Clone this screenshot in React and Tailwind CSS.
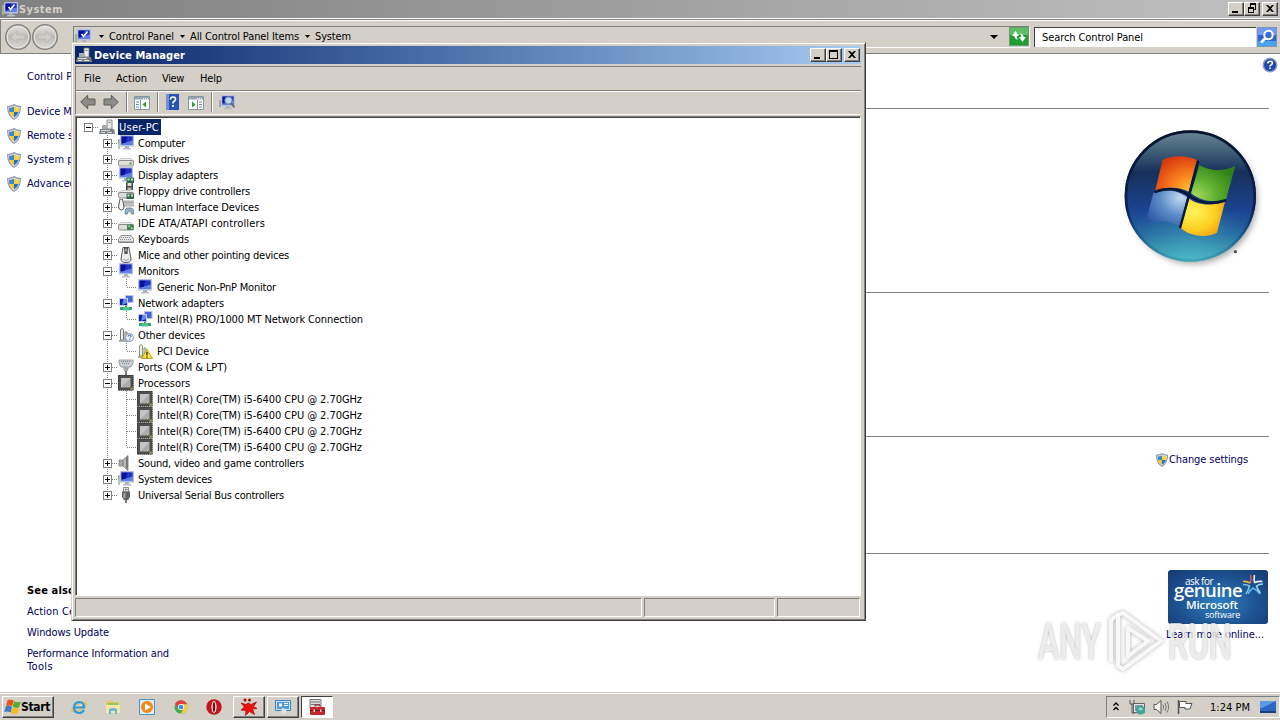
import React, { useLayoutEffect, useRef, useState } from 'react';

// Text set to a fixed advance width through letter spacing
const Fit = ({ w, className = '', children }) => {
  const ref = useRef(null);
  const [spacing, setSpacing] = useState(0);
  useLayoutEffect(() => {
    const natural = ref.current.getBoundingClientRect().width;
    setSpacing((w - natural) / ref.current.textContent.length);
  }, [w]);
  return (
    <span ref={ref} className={`inline-block whitespace-pre ${className}`} style={{ letterSpacing: `${spacing}px` }}>
      {children}
    </span>
  );
};

const Svg = ({ s = 16, className = '', children }) => (
  <svg width={s} height={s} viewBox="0 0 16 16" className={`block shrink-0 ${className}`}>
    {children}
  </svg>
);

const Screen = ({ x = 2, y = 0 }) => (
  <g transform={`translate(${x} ${y})`}>
    <path d="M5 11h4v2H5z" fill="#a9adb8" />
    <path d="M3 13h8v1.500H3z" fill="#b9bdc8" />
    <rect x="0" y="0" width="14" height="11.500" rx=".5" fill="#b9c0dc" />
    <rect x="1.500" y="1.500" width="11" height="8.500" fill="#2a48d0" />
    <path d="M1.500 1.500h6L6 8l-4.500.5z" fill="#0a129c" />
    <path d="M7.500 1.500h5V6L6.200 7z" fill="#1e34c4" />
    <path d="M1.500 9l11-3.500V10h-11z" fill="#5f80e8" />
  </g>
);

const Drive = () => (
  <g transform="translate(0 1)">
    <path d="M3 6.500h10l2.500 2.500H.5z" fill="#f0f0ee" stroke="#aaa" strokeWidth=".6" />
    <rect x=".5" y="8.500" width="15" height="5.500" rx="1.500" fill="#dededc" stroke="#777" strokeWidth=".8" />
    <path d="M11.500 10.500h2v2h-2z" fill="#4c9b3c" />
  </g>
);

const Card = () => (
  <g>
    <path d="M8.500 10.500H16V16H8.500z" fill="#2c6b48" />
    <path d="M9.500 11.500h2v2h-2zM13 11.500h2v2h-2z" fill="#c8e8cc" />
  </g>
);

const ICONS = {
  pc: (
    <>
      <path d="M8 1h5v9H8z" fill="#e8e8e6" stroke="#777" strokeWidth=".8" />
      <path d="M9.500 3h2v1h-2z" fill="#777" />
      <path d="M3 6h5v4H3z" fill="#a6abb0" />
      <path d="M1 10h14l1 5H0z" fill="#7b8082" />
      <path d="M2 11h9v1H2zM2 13h4v1H2zM8 13h5v1H8z" fill="#d9dddc" />
    </>
  ),
  computer: (
    <>
      <Screen />
      <path d="M0 4h2v10H0z" fill="#c0c4b4" />
      <path d="M0 5h1.500v3H0z" fill="#9ab45a" />
    </>
  ),
  disk: <Drive />,
  display: (
    <>
      <Screen x={1} />
      <Card />
    </>
  ),
  floppy: (
    <>
      <Drive />
      <path d="M8 0h7v7H8z" fill="#444" />
      <path d="M9.500 0h4v3h-4z" fill="#ddd" />
      <path d="M9.500 4.500h4V7h-4z" fill="#b8b8a8" />
      <Card />
    </>
  ),
  hid: (
    <>
      <path d="M6 2h10v5H6z" fill="#d8d8da" stroke="#888" strokeWidth=".7" />
      <path d="M7.500 3.500h7M7.500 5h7" stroke="#777" strokeDasharray="1 1" />
      <path d="M2 0h2.500l1.500 8q0 3-2.500 3T.5 8z" fill="#f5f5f5" stroke="#555" />
      <path d="M7 15q0-7 3-6h3q3 0 2.500 6h-2l-1-3h-2l-1 3z" fill="#8fb6cf" stroke="#546c80" strokeWidth=".7" />
    </>
  ),
  ide: (
    <>
      <Drive />
      <path d="M9 9.500h6.500V15H9z" fill="#3c8752" />
      <path d="M10.500 10.500h1.500v1.500h-1.500zM13 12.500h1.500V14H13z" fill="#c4ecc8" />
    </>
  ),
  keyboard: (
    <>
      <path d="M3 4.500h10l2.500 3.500v3.500H.5V8z" fill="#e6e6e6" stroke="#777" strokeWidth=".8" />
      <path d="M3 6.500h10M2 8.500h12" stroke="#888" strokeDasharray="1 1" />
      <path d="M1 11h14" stroke="#777" />
    </>
  ),
  mouse: (
    <>
      <path d="M5 .5h6L13 12q0 3.500-5 3.500T3 12z" fill="#efefef" stroke="#555" />
      <path d="M6 1h4l-.500 6h-3z" fill="#4c4c4c" />
      <path d="M7.500 1.500h1v3h-1z" fill="#eee" />
      <path d="M5 12q3 3 6 0" stroke="#999" fill="none" />
    </>
  ),
  monitor: <Screen x={1} />,
  network: (
    <>
      <path d="M7 0h8.500v8H7z" fill="#b9c2e4" />
      <path d="M8 1h6.500v6H8z" fill="#4666d8" />
      <path d="M1 3h9v8H1z" fill="#c7cce2" />
      <path d="M2 4h7v6H2z" fill="#141fb0" />
      <path d="M5.500 4H9v4L4 10z" fill="#6a8cec" />
      <path d="M7 10.500h2V12h5v3H2v-3h5z" fill="#35a36c" />
      <path d="M5 12h6v3.500H5z" fill="#4cc48b" />
    </>
  ),
  other: (
    <>
      <path d="M2.500 13V2.500q1.500-2 3 0V13zM7 13V5h2v8z" fill="#eee" stroke="#777" />
      <path d="M1 13h9v2H1z" fill="#aaa" />
      <circle cx="11.500" cy="10.500" r="4" fill="#eef3fb" stroke="#8196b8" />
      <path d="M10.200 9.500q0-1.500 1.400-1.500t1.400 1.300q0 .8-1.400 1.700m0 1.200v1" stroke="#2757b0" fill="none" />
    </>
  ),
  warn: (
    <>
      <path d="M2.500 13V2.500q1.500-2 3 0V13zM7 13V5h2v8z" fill="#eee" stroke="#8a9a68" />
      <path d="M1 13h6v2H1z" fill="#aaa" />
      <path d="M10 6.500L15.500 15.500H4.500z" fill="#ffe136" stroke="#b08e08" strokeWidth=".8" />
      <path d="M10 9v3.500m0 1v1.200" stroke="#222" strokeWidth="1.300" />
    </>
  ),
  port: (
    <>
      <path d="M1 1h14v3l-2 4H3L1 4z" fill="#cdd1d4" stroke="#888" strokeWidth=".8" />
      <path d="M3 2.500h10M4 4.500h8" stroke="#6c8090" strokeDasharray="1 1" />
      <path d="M5 8h6l-1 4H6z" fill="#a3abb0" />
      <path d="M7 12h2v4H7z" fill="#777" />
    </>
  ),
  cpu: (
    <>
      <path d="M0 0h15.500v15.500H0z" fill="#50504e" />
      <path d="M.5.5h14.500v14.500H.5z" fill="none" stroke="#333" strokeDasharray="1 1" />
      <path d="M3 3h9.500v9.500H3z" fill="#aaabaa" />
      <path d="M3 3h9.500L3 12.500z" fill="#c4c4c4" />
      <path d="M12 14.500l2.500-2.500v2.500z" fill="#d9c23c" />
    </>
  ),
  sound: (
    <>
      <path d="M1 5h4v6H1z" fill="#a8abac" stroke="#777" strokeWidth=".7" />
      <path d="M5 5l5-4.500v15L5 11z" fill="#b7babb" stroke="#777" strokeWidth=".8" />
      <path d="M8 3l2-2v14l-2-2z" fill="#75797b" />
    </>
  ),
  usb: (
    <>
      <path d="M5.500.5h5V5h-5z" fill="#ddd" stroke="#777" strokeWidth=".8" />
      <path d="M7 2h.8v1H7zM8.500 2h.8v1h-.8z" fill="#444" />
      <path d="M4 4.500h8V10l-2 3H6l-2-3z" fill="#5c6164" />
      <path d="M5.500 6h2v5h-2z" fill="#a7acae" />
      <path d="M7.300 13h1.400v3H7.300z" fill="#444" />
    </>
  ),
};

const CPU = 'Intel(R) Core(TM) i5-6400 CPU @ 2.70GHz';

// level, icon, label, label width, expander, last child
const TREE = [
  [1, 'computer', 'Computer', 47, '+'],
  [1, 'disk', 'Disk drives', 51, '+'],
  [1, 'display', 'Display adapters', 80, '+'],
  [1, 'floppy', 'Floppy drive controllers', 112, '+'],
  [1, 'hid', 'Human Interface Devices', 121, '+'],
  [1, 'ide', 'IDE ATA/ATAPI controllers', 127, '+'],
  [1, 'keyboard', 'Keyboards', 51, '+'],
  [1, 'mouse', 'Mice and other pointing devices', 151, '+'],
  [1, 'monitor', 'Monitors', 41, '-'],
  [2, 'monitor', 'Generic Non-PnP Monitor', 119, '', true],
  [1, 'network', 'Network adapters', 86, '-'],
  [2, 'network', 'Intel(R) PRO/1000 MT Network Connection', 206, '', true],
  [1, 'other', 'Other devices', 67, '-'],
  [2, 'warn', 'PCI Device', 52, '', true],
  [1, 'port', 'Ports (COM & LPT)', 89, '+'],
  [1, 'cpu', 'Processors', 52, '-'],
  [2, 'cpu', CPU, 205, ''],
  [2, 'cpu', CPU, 205, ''],
  [2, 'cpu', CPU, 205, ''],
  [2, 'cpu', CPU, 205, '', true],
  [1, 'sound', 'Sound, video and game controllers', 166, '+'],
  [1, 'computer', 'System devices', 74, '+'],
  [1, 'usb', 'Universal Serial Bus controllers', 146, '+', true],
];

// One 19px indent column: dotted guides and the expander box
const Guide = ({ up, down, across, box }) => (
  <svg width="19" height="16" viewBox="0 0 19 16" className="block shrink-0" shapeRendering="crispEdges">
    <g stroke="#808080" strokeDasharray="1 1" fill="none">
      {up && <path d="M9.500 0v8" />}
      {down && <path d="M9.500 8v8" />}
      {across && <path d="M10 8.500h9" />}
    </g>
    {box && (
      <>
        <rect x="5.500" y="4.500" width="8" height="8" fill="#fff" stroke="#808080" />
        <path d="M7 8.500h5" stroke="#000" />
        {box === '+' && <path d="M9.500 6v5" stroke="#000" />}
      </>
    )}
  </svg>
);

const TreeRow = ({ row }) => {
  const [level, icon, label, w, box, last] = row;
  return (
    <div className="flex h-4 items-center">
      <div className="w-[19px]" />
      {level === 1 ? (
        <Guide up down={!last} across box={box} />
      ) : (
        <>
          <Guide up down />
          <Guide up down={!last} across />
        </>
      )}
      <Svg className="ml-px">{ICONS[icon]}</Svg>
      <Fit w={w} className="ml-[4px]">{label}</Fit>
    </div>
  );
};

const RAISED = 'border border-t-white border-l-white border-r-[#404040] border-b-[#404040] bg-[#d4d0c8] shadow-[inset_-1px_-1px_0_#808080]';
const SUNKEN = 'border border-t-[#808080] border-l-[#808080] border-r-white border-b-white';

const CaptionButton = ({ kind, className = '' }) => (
  <div className={`h-[14px] w-4 shrink-0 ${RAISED} ${className}`}>
    <svg width="14" height="12" viewBox="0 0 14 12" className="block" shapeRendering="crispEdges">
      {kind === 'min' && <path d="M3 8h6v2H3z" />}
      {kind === 'max' && <path d="M2 1h9v9H2zM3 3v6h7V3z" fillRule="evenodd" />}
      {kind === 'restore' && <path d="M5 0h6v7H9v3H3V4h2zM6 2v2h3v2h1V2zM4 6v3h4V6z" fillRule="evenodd" />}
      {kind === 'close' && <path d="M3 2h2l2 2 2-2h2L8 5.500l3 3.500H9L7 7 5 9H3l3-3.500z" shapeRendering="auto" />}
    </svg>
  </div>
);

const Shield = ({ s = 16, className = '' }) => (
  <Svg s={s} className={className}>
    <path d="M8 0q3 2 7 2 0 10-7 14Q1 12 1 2q4 0 7-2z" fill="#8d9aa6" />
    <path d="M8 1.500q2.500 1.500 5.800 1.700Q13.500 11 8 14.700 2.500 11 2.200 3.200 5.500 3 8 1.500z" fill="#dfe4e8" />
    <path d="M8 2.500V8H3.400Q3 6 3 4q2.500 0 5-1.500z" fill="#3c84cc" />
    <path d="M8 2.500Q10.500 4 13 4q0 2-.4 4H8z" fill="#f5d33b" />
    <path d="M3.400 8H8v5.500Q4.500 11.500 3.400 8z" fill="#f2ca2e" />
    <path d="M8 8h4.600Q11.500 11.500 8 13.500z" fill="#2a6fc0" />
  </Svg>
);

const SIDE_LINKS = ['Device Manager', 'Remote settings', 'System protection', 'Advanced system settings'];
const SIDE_WIDTHS = [79, 80, 91, 130];

const NavCircle = ({ flip }) => (
  <svg width="28" height="28" viewBox="0 0 28 28" className="-mr-px block">
    <defs>
      <linearGradient id="nav" x2="0" y2="1">
        <stop offset="0" stopColor="#e8e6e3" />
        <stop offset=".5" stopColor="#bdbbb7" />
        <stop offset="1" stopColor="#dddbd7" />
      </linearGradient>
    </defs>
    <circle cx="14" cy="14" r="12.300" fill="url(#nav)" stroke="#85837f" strokeWidth="1.400" />
    <circle cx="14" cy="14" r="10.800" fill="none" stroke="#e6e5e1" />
    <path
      d="M7 14l6-6v4h8v4h-8v4z"
      fill="#cfcdc9"
      stroke="#b7b4ae"
      strokeWidth=".8"
      transform={flip ? 'translate(28 0) scale(-1 1)' : undefined}
    />
  </svg>
);

const Crumb = ({ w, children }) => (
  <>
    <svg width="5" height="3" viewBox="0 0 5 3" className="block">
      <path d="M0 0h5L2.500 3z" />
    </svg>
    <Fit w={w} className="mr-[6px] ml-[5px]">{children}</Fit>
  </>
);

const WindowsFlag = () => (
  <svg width="17" height="16" viewBox="130 130 280 260" className="block shrink-0">
    <path d="M188 150C215 135 260 135 290 150L266 245C240 232 200 228 165 243Z" fill="#e8531c" />
    <path d="M298 165C330 185 370 185 406 168L378 268C345 280 305 275 273 250Z" fill="#5aa82e" />
    <path d="M160 250C195 235 235 240 262 262L239 350C210 330 170 330 135 342Z" fill="#3a7ad0" />
    <path d="M268 266C300 290 345 285 375 275L351 368C320 385 270 380 243 355Z" fill="#f5bb1c" />
  </svg>
);

const Orb = () => (
  <svg width="150" height="160" viewBox="51 24 450 480" className="block">
    <defs>
      <linearGradient id="orb" x2="0" y2="1">
        <stop offset="0" stopColor="#6a8798" />
        <stop offset=".12" stopColor="#4a6a80" />
        <stop offset=".32" stopColor="#16305a" />
        <stop offset=".6" stopColor="#1b4390" />
        <stop offset=".8" stopColor="#24679f" />
        <stop offset="1" stopColor="#3fa5b8" />
      </linearGradient>
      <radialGradient id="glow" cx=".5" cy="1" r=".5">
        <stop offset="0" stopColor="#5ad0d4" stopOpacity=".5" />
        <stop offset="1" stopColor="#5ad0d4" stopOpacity="0" />
      </radialGradient>
      <linearGradient id="rim" x2="0" y2="1">
        <stop offset="0" stopColor="#06142e" />
        <stop offset=".6" stopColor="#0a2252" />
        <stop offset="1" stopColor="#2a7a9c" stopOpacity=".3" />
      </linearGradient>
      <radialGradient id="red" cx=".85" cy=".95" r="1">
        <stop offset="0" stopColor="#ffc52e" />
        <stop offset=".5" stopColor="#f8781c" />
        <stop offset="1" stopColor="#d83a10" />
      </radialGradient>
      <radialGradient id="green" cx=".1" cy=".85" r="1">
        <stop offset="0" stopColor="#a4da5c" />
        <stop offset=".5" stopColor="#5cae2e" />
        <stop offset="1" stopColor="#2f8018" />
      </radialGradient>
      <radialGradient id="blue" cx=".85" cy=".2" r="1">
        <stop offset="0" stopColor="#c4dcf2" />
        <stop offset=".5" stopColor="#5b8cc8" />
        <stop offset="1" stopColor="#2c4f9f" />
      </radialGradient>
      <radialGradient id="yellow" cx=".3" cy=".35" r=".8">
        <stop offset="0" stopColor="#fff45c" />
        <stop offset=".6" stopColor="#fdd01f" />
        <stop offset="1" stopColor="#ee9a14" />
      </radialGradient>
      <filter id="soft" x="-20%" y="-20%" width="140%" height="140%">
        <feGaussianBlur stdDeviation="9" />
      </filter>
    </defs>
    <circle cx="280" cy="270" r="192" fill="#555" opacity=".5" filter="url(#soft)" />
    <circle cx="271" cy="258" r="197" fill="url(#orb)" />
    <circle cx="271" cy="258" r="197" fill="url(#glow)" />
    <circle cx="271" cy="258" r="193" fill="none" stroke="url(#rim)" strokeWidth="8" />
    <path d="M188 150C215 135 260 135 290 150L266 245C240 232 200 228 165 243Z" fill="url(#red)" />
    <path d="M298 165C330 185 370 185 406 168L378 268C345 280 305 275 273 250Z" fill="url(#green)" />
    <path d="M160 250C195 235 235 240 262 262L239 350C210 330 170 330 135 342Z" fill="url(#blue)" />
    <path d="M268 266C300 290 345 285 375 275L351 368C320 385 270 380 243 355Z" fill="url(#yellow)" />
    <path d="M164 246C200 231 240 236 267 256C300 284 345 282 378 271" fill="none" stroke="#0a1838" strokeWidth="8" />
    <path d="M295 152L240 354" stroke="#0a1838" strokeWidth="7" />
    <circle cx="406" cy="425" r="5" fill="#555" />
  </svg>
);

const SystemWindow = () => (
  <div className="flex h-[692px] flex-col bg-white">
    <div className="flex h-[18px] items-center bg-linear-to-r from-[#808080] to-[#c0c0c0] pr-0.5 pl-0.5">
      <Svg><Screen y={1} /><path d="M0 4h2v10H0z" fill="#9fb48a" /><path d="M6.500 6l2 2.500 4-5" stroke="#fff" strokeWidth="1.600" fill="none" /></Svg>
      <Fit w={44} className="ml-px font-bold text-[#d4d0c8]">System</Fit>
      <div className="ml-auto flex">
        <CaptionButton kind="min" />
        <CaptionButton kind="restore" />
        <CaptionButton kind="close" className="ml-[2px]" />
      </div>
    </div>
    <div className="mt-px flex h-[35px] items-center border-t border-b border-l border-[#808080] bg-[#d4d0c8] pl-[3px] shadow-[inset_0_1px_0_#fff]">
      <NavCircle />
      <NavCircle flip />
      <div className={`ml-[15px] flex h-[22px] w-[957px] items-center pl-px ${SUNKEN}`}>
        <Svg><Screen /><path d="M0 5h2v8H0z" fill="#9fb48a" /><path d="M6.500 5l2 2.500 4-5" stroke="#fff" strokeWidth="1.600" fill="none" /></Svg>
        <div className="w-[8px]" />
        <Crumb w={65}>Control Panel</Crumb>
        <Crumb w={109}>All Control Panel Items</Crumb>
        <Crumb w={36}>System</Crumb>
        <svg width="8" height="4" viewBox="0 0 8 4" className="mr-[11px] ml-auto block"><path d="M0 0h8L4 4z" /></svg>
        <svg width="20" height="19" viewBox="0 0 20 19" className="block">
          <rect width="20" height="19" fill="#1f9f33" />
          <path d="M0 0h20v8H0z" fill="#5fbf66" />
          <path d="M6.500 4L3 9h2.300q.5 3.500 4 3.500Q7.500 11 8 9h2zM13.500 15l3.500-5h-2.300q-.5-3.500-4-3.500Q12.500 8 12 10h-2z" fill="#fff" />
          <path d="M.5.5h19v18H.5z" fill="none" stroke="#6b9a6c" />
        </svg>
      </div>
      <div className="ml-[4px] flex h-[20px] w-[222px] items-center border-t border-l border-[#404040] bg-white pl-[7px]">
        <Fit w={101}>Search Control Panel</Fit>
      </div>
      <svg width="20" height="20" viewBox="0 0 20 20" className="ml-px block">
        <rect width="20" height="20" fill="#2e62d8" />
        <path d="M0 0h20v8H0z" fill="#6f9cf0" />
        <path d="M0 14h20v6H0z" fill="#46a4ee" />
        <circle cx="11.500" cy="8" r="4.200" fill="#3a6be0" stroke="#fff" strokeWidth="2" />
        <path d="M8.500 11l-4.500 4.500" stroke="#fff" strokeWidth="2.600" />
        <path d="M.5.500h19v19H.5z" fill="none" stroke="#8494b8" />
      </svg>
    </div>
    <div className="flex flex-1 text-[#00005a]">
      <div className="flex w-[210px] flex-col pl-[6px]">
        <div className="mt-[16px] h-4 pl-[21px]"><Fit w={99}>Control Panel Home</Fit></div>
        <div className="mt-[13px] flex flex-col">
          {SIDE_LINKS.map((label, i) => (
            <div key={label} className="flex h-6 items-center">
              <Shield className="mt-px" />
              <Fit w={SIDE_WIDTHS[i]} className="ml-[5px]">{label}</Fit>
            </div>
          ))}
        </div>
        <div className="mt-[389px] flex flex-col pl-[21px]">
          <Fit w={48} className="h-[21px] self-start font-bold text-black">See also</Fit>
          <Fit w={69} className="h-[21px] self-start">Action Center</Fit>
          <Fit w={82} className="h-[21px] self-start">Windows Update</Fit>
          <Fit w={142} className="h-[13px] self-start">Performance Information and</Fit>
          <Fit w={26} className="self-start">Tools</Fit>
        </div>
      </div>
      <div className="flex w-[1059px] flex-col">
        <div className="h-[55px] border-b border-[#808080]" />
        <div className="flex h-[184px] justify-end border-b border-[#808080] pt-[9px] pr-[2px]"><Orb /></div>
        <div className="h-[144px] border-b border-[#808080]" />
        <div className="flex h-[117px] justify-end border-b border-[#808080] pt-[14px] pr-[21px]">
          <div className="flex h-4 items-center">
            <Shield s={14} className="mt-px" />
            <Fit w={79}>Change settings</Fit>
          </div>
        </div>
        <div className="flex flex-1 flex-col items-end pt-4">
          <Badge />
          <Fit w={98} className="mt-[4px] mr-[5px]">Learn more online...</Fit>
        </div>
      </div>
      <svg width="16" height="16" viewBox="0 0 16 16" className="mt-[3px] -ml-[7px] block shrink-0">
        <circle cx="8" cy="8" r="7.500" fill="#8ba0c8" />
        <circle cx="8" cy="8" r="6" fill="#2347a8" />
        <path d="M5.800 6.500q0-2.300 2.300-2.300t2.200 2q0 1-1.200 1.700T8 9.500M8 10.500v1.600" stroke="#fff" strokeWidth="1.600" fill="none" />
      </svg>
    </div>
  </div>
);

const Badge = () => (
  <div className="mr-px flex h-[54px] w-[100px] rounded-[3px] bg-[radial-gradient(ellipse_at_50%_60%,#2f80c0,#1c4f8e_60%,#153a72)] pl-[6px] font-['Open_Sans'] text-white">
    <div className="flex w-[67px] flex-col pt-[6px]">
      <Fit w={28} className="ml-[11px] h-[8px] self-start text-[10px] leading-[11px]">ask for</Fit>
      <Fit w={68} className="h-[14px] self-start text-[18.500px] leading-[12px] font-semibold">genuine</Fit>
      <Fit w={52} className="ml-[12px] h-[12px] self-start text-[11.500px] leading-[13px] font-semibold">Microsoft</Fit>
      <Fit w={35} className="ml-[31px] h-[9px] self-start text-[9px] leading-[9px]">software</Fit>
    </div>
    <svg width="24" height="24" viewBox="0 0 24 24" className="mt-[3px] block shrink-0" fill="none" strokeWidth="1.600">
      <path d="M9.500 2q1 5 0 8" stroke="#e8604c" />
      <path d="M9.500 10q-4-2-7.500-1.500" stroke="#f0b03c" />
      <path d="M13.500 2q-1 5 0 7.500 4-1.500 8-1" stroke="#e8f4fa" />
      <path d="M2 11.500q4 0 6.500 1.500-1 4-3.500 8" stroke="#7ec4e8" />
      <path d="M7 21q2-4 5-6 4 2 7 6" stroke="#5cb6e8" />
      <path d="M22 11q-4 0-6.500 2 1 4 4 7" stroke="#9adcf0" />
    </svg>
  </div>
);

const ToolArrow = ({ flip }) => (
  <Svg>
    <path
      d="M.7 8l7-6.800V5H15v6H7.700v3.800z"
      fill="#8c8c88"
      stroke="#5c5c58"
      transform={flip ? 'translate(16 0) scale(-1 1)' : undefined}
    />
  </Svg>
);

const Separator = ({ className = '' }) => (
  <div className={`h-5 w-[2px] border-l border-[#808080] bg-white ${className}`} />
);

const PaneIcon = ({ flip }) => (
  <Svg>
    <path d="M.5 2.500h15v13H.5z" fill="#fff" stroke="#8c949c" />
    <path d="M1 3h14v2.500H1z" fill="#8fa4b4" />
    <path d="M9 4h1v1H9zM11 4h1v1h-1zM13 4h1v1h-1z" fill="#fff" />
    <g transform={flip ? 'translate(16 0) scale(-1 1)' : undefined}>
      <path d="M6.500 6v9" stroke="#8c949c" />
      <path d="M2 8h3M2 10.500h3M2 13h3" stroke="#5f8cc0" />
      <path d="M12 7.500v6L8.500 10.500z" fill="#2f9a38" />
    </g>
  </Svg>
);

const DeviceManager = () => (
  <div className="absolute top-[42px] left-[71px] flex h-[579px] w-[795px] flex-col border border-t-[#d4d0c8] border-r-[#404040] border-b-[#404040] border-l-[#d4d0c8] bg-[#d4d0c8] py-[3px] pr-[4px] pl-[3px] shadow-[inset_1px_1px_0_#fff,inset_-1px_-1px_0_#808080]">
    <div className="flex h-[18px] items-center bg-linear-to-r from-[#0a246a] to-[#a6caf0] pr-px pl-px">
      <Svg>{ICONS.pc}</Svg>
      <Fit w={91} className="ml-[2px] font-bold text-white">Device Manager</Fit>
      <div className="ml-auto flex">
        <CaptionButton kind="min" />
        <CaptionButton kind="max" />
        <CaptionButton kind="close" className="ml-[2px]" />
      </div>
    </div>
    <div className="mt-[2px] flex h-[24px] items-center border-t border-l border-t-[#808080] border-l-[#808080] pl-[8px]">
      <Fit w={17}>File</Fit>
      <Fit w={31} className="ml-[15px]">Action</Fit>
      <Fit w={22} className="ml-[15px]">View</Fit>
      <Fit w={22} className="ml-[16px]">Help</Fit>
    </div>
    <div className="flex h-[25px] items-center border-t border-b border-l border-t-[#808080] border-b-white border-l-[#808080] pb-[2px] pl-[4px] shadow-[inset_0_1px_0_#fff]">
      <ToolArrow />
      <div className="ml-[7px]"><ToolArrow flip /></div>
      <Separator className="mr-[6px] ml-[7px]" />
      <PaneIcon />
      <Separator className="mr-[7px] ml-[7px]" />
      <svg width="13" height="16" viewBox="0 0 13 16" className="block">
        <path d="M0 0h13v16H0z" fill="#2a51b4" />
        <path d="M0 0h3v16H0z" fill="#6f90d8" />
        <path d="M4.500 5.500Q4.500 3 7 3t2.500 2.200q0 1.300-1.300 2.100T7 9.500M7 11v2" stroke="#fff" strokeWidth="1.700" fill="none" />
      </svg>
      <div className="ml-[9px]"><PaneIcon flip /></div>
      <Separator className="mr-[6px] ml-[7px]" />
      <Svg>
        <Screen x={2} y={1} />
        <path d="M0 6h2v7H0z" fill="#a5aaa0" />
        <circle cx="9.500" cy="6.500" r="3.600" fill="#b9d6f2" stroke="#6f86a8" strokeWidth="1.200" />
        <path d="M12 9l3.500 4.500" stroke="#666" strokeWidth="1.800" />
      </Svg>
    </div>
    <div className="mt-px h-[480px] border border-t-[#808080] border-r-white border-b-white border-l-[#808080] bg-white">
      <div className="h-full border-t border-l border-[#404040] pt-px pl-[2px]">
        <div className="flex h-4 items-center">
          <Guide across box="-" />
          <Svg className="ml-px">{ICONS.pc}</Svg>
          <div className="ml-[3px] flex h-4 w-[43px] items-center bg-[#0a246a] pl-px text-white">
            <Fit w={40}>User-PC</Fit>
          </div>
        </div>
        {TREE.map((row, i) => <TreeRow key={i} row={row} />)}
      </div>
    </div>
    <div className="mt-[2px] flex h-[19px] gap-[2px]">
      <div className={`w-[567px] ${SUNKEN}`} />
      <div className={`w-[131px] ${SUNKEN}`} />
      <div className={`w-[83px] ${SUNKEN}`} />
    </div>
  </div>
);

const TaskIcons = () => (
  <>
    <Svg className="ml-[17px]">
      <ellipse cx="8" cy="8" rx="8" ry="3.200" fill="none" stroke="#e9b93a" strokeWidth="1.200" transform="rotate(-28 8 8)" />
      <path d="M13 11q-1.500 3-5 3-5-.5-5-5.500T8 3q5 0 5 5.500H4" fill="none" stroke="#2b9be0" strokeWidth="2.200" />
    </Svg>
    <Svg className="ml-[18px]">
      <path d="M1 3l5-2 2 2h6v11H1z" fill="#e5c65f" />
      <path d="M3 4h10v4H3z" fill="#8dc96c" />
      <path d="M1 6h14v8H1z" fill="#f8e9a0" />
      <path d="M4 15v-5q4-2 8 0v5h-2v-3H6v3z" fill="#6fb2dd" />
    </Svg>
    <Svg className="ml-[18px]">
      <path d="M.5.500h15v15H.5z" fill="#dcecf8" stroke="#4b94cc" />
      <circle cx="8" cy="8" r="6" fill="#f28a18" />
      <path d="M6 4.500L12 8l-6 3.500z" fill="#fff" />
    </Svg>
    <Svg s={14} className="ml-[19px]">
      <circle cx="8" cy="8" r="7.500" fill="#4aa94e" />
      <path d="M1.500 4.200A7.500 7.500 0 0114.700 4.500H8L5 10z" fill="#de4437" />
      <path d="M15 5a7.500 7.500 0 01-7 10.500L11.300 9 9 4.700z" fill="#fbcd3b" />
      <circle cx="8" cy="8" r="3.500" fill="#fff" />
      <circle cx="8" cy="8" r="2.700" fill="#4285e8" />
    </Svg>
    <Svg className="ml-[18px]">
      <circle cx="8" cy="8" r="7.700" fill="#c2161c" />
      <ellipse cx="8" cy="8" rx="2.500" ry="6" fill="#fff" />
      <ellipse cx="8" cy="8" rx="1.300" ry="5" fill="#8b0b10" />
    </Svg>
  </>
);

const Taskbar = () => (
  <div className="flex h-[28px] items-center border-t border-[#d4d0c8] bg-[#d4d0c8] pt-px pl-[2px] shadow-[inset_0_1px_0_#fff]">
    <div className={`flex h-[22px] w-[52px] items-center pl-px ${RAISED}`}>
      <WindowsFlag />
      <Fit w={29} className="text-[12px] font-bold">Start</Fit>
    </div>
    <TaskIcons />
    <div className={`ml-[11px] flex h-[22px] w-8 items-center justify-center ${RAISED}`}>
      <svg width="18" height="18" viewBox="0 0 18 18" className="block">
        <path d="M8 5l3 1.500L16.500 4l-3 4.500 3.500 2-4.500.5 2 5.500-5-3-4 4 .500-5L1 12l3.500-3L1 5l5 1.500z" fill="#ee1111" stroke="#a00000" strokeWidth=".7" />
        <circle cx="5" cy="2" r="1.500" fill="#a00" />
        <circle cx="9.500" cy="2" r="1.500" fill="#a00" />
      </svg>
    </div>
    <div className={`ml-[2px] flex h-[22px] w-8 items-center justify-center ${RAISED}`}>
      <Svg>
        <path d="M.5 1.500h15v10H.5z" fill="#c7e3f8" stroke="#3d82bd" />
        <path d="M2 3h12v7H2z" fill="#4a9ad8" />
        <path d="M4 4.500h3v3H4zM9 4h4v1H9zM9 6h4v1H9z" fill="#fff" />
        <path d="M7 9l5 1-2 5-4-1z" fill="#d9e3ea" />
      </Svg>
    </div>
    <div className="ml-[2px] flex h-[22px] w-8 items-center justify-center border border-t-[#404040] border-r-white border-b-white border-l-[#404040] bg-white">
      <Svg>
        <path d="M1 .5h11v9H1z" fill="#ddd" stroke="#777" />
        <path d="M2 3h9M2 5.500h9" stroke="#777" />
        <path d="M6 7.500V6h5v1.500" fill="none" stroke="#881418" />
        <rect x="1" y="8" width="15" height="8" rx="1" fill="#c5282c" />
        <path d="M1 11h15v1H1z" fill="#7d1114" />
        <path d="M4.500 10.500H6V13H4.500zM11 10.500h1.500V13H11z" fill="#ddd" />
      </Svg>
    </div>
    <div className={`ml-auto flex h-[22px] w-[174px] items-center pl-[6px] ${SUNKEN}`}>
      <svg width="6" height="9" viewBox="0 0 6 9" className="mb-[2px] block shrink-0" fill="none" stroke="#000" strokeWidth="1.300">
        <path d="M.5 3.500L3 1l2.500 2.500M.5 8L3 5.500 5.500 8" />
      </svg>
      <Svg className="ml-[10px]">
        <path d="M4.500 4.500h11v9h-11z" fill="#e8e8e6" stroke="#666" />
        <path d="M6 6h8v6H6z" fill="#829ab0" />
        <path d="M1 1v4h4V1M3 5v9h3" fill="none" stroke="#555" />
        <circle cx="11.500" cy="11" r="4.500" fill="#3fa69c" />
        <path d="M9 10q2.500-3 5 0-2 3-5 0z" fill="#93dccf" />
      </Svg>
      <Svg className="ml-[8px]">
        <path d="M1 5.500h2.500L8 1.500v13l-4.500-4H1z" fill="#f3f3f1" stroke="#555" />
        <path d="M10 5.500q1.500 2.500 0 5M12 4q2.500 4 0 8M14 2.500q3.300 5.500 0 11" fill="none" stroke="#777" />
      </Svg>
      <Svg className="ml-[8px]">
        <path d="M1.500 1v14" stroke="#555" strokeWidth="1.500" />
        <path d="M2.500 2.500H9v2h6l-2 5.500H8V8.500H2.500z" fill="#fafafa" stroke="#555" />
      </Svg>
      <Fit w={40} className="ml-[17px]">1:24 PM</Fit>
      <Svg className="ml-[10px]">
        <path d="M0 2h16v12H0z" fill="#2a68c4" />
        <path d="M0 2h16L2 9H0z" fill="#5f9be4" />
        <path d="M0 12h16v2H0z" fill="#1d3c78" />
      </Svg>
    </div>
  </div>
);

const Watermark = () => (
  <div className="absolute top-[609px] left-[1038px] flex h-[66px] w-[200px] items-center font-['Roboto'] text-[50px] leading-none font-medium text-white/75 [text-shadow:0_0_3px_rgba(0,0,0,0.35)]">
    <div className="w-[70px]"><span className="inline-block origin-left scale-x-[0.64]">ANY</span></div>
    <svg width="56" height="64" viewBox="0 0 56 64" className="block shrink-0 overflow-visible drop-shadow-[0_0_2px_rgba(0,0,0,0.35)]" fill="none" stroke="#fff" strokeOpacity=".85" strokeLinejoin="round">
      <path d="M3 52V10l8-6" strokeWidth="4" />
      <path d="M15 3l38 28-38 28-5-3V5z" strokeWidth="4" />
      <path d="M20 18l20 13-20 15z" strokeWidth="4" />
    </svg>
    <div className="ml-[4px] w-[68px]"><span className="inline-block origin-left scale-x-[0.64]">RUN</span></div>
  </div>
);

const App = () => (
  <div className="relative h-[720px] w-[1280px] overflow-hidden bg-white font-['DejaVu_Sans_Condensed','DejaVu_Sans',sans-serif] text-[11px] leading-[13px] text-black">
    <SystemWindow />
    <Taskbar />
    <DeviceManager />
    <Watermark />
  </div>
);

export default App;
